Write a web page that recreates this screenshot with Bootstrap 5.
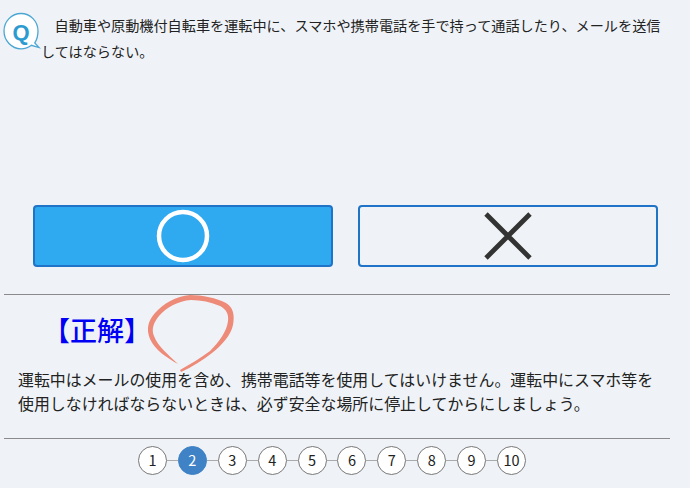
<!DOCTYPE html>
<html lang="ja">
<head>
<meta charset="utf-8">
<title>問題</title>
<link href="https://cdn.jsdelivr.net/npm/bootstrap@5.3.0/dist/css/bootstrap.min.css" rel="stylesheet">
<style>
html,body{height:488px;overflow:hidden}
body{background:#eff3f7;color:#222;font-family:"Noto Sans CJK JP","Noto Sans",sans-serif}
.quiz-wrap{width:690px}
.q-block{height:205px;padding:13px 25px 0 0;font-size:14.15px;line-height:25.5px}
.q-icon{float:left;width:41px;height:40px;margin:-3px 0 0 0}
.q-text{text-indent:13.5px;margin:0}
.ans-row{padding:0 32px 0 33px;gap:25px}
.ans-btn{width:300px;height:62px;border:2px solid #1f74c7;border-radius:4px;padding:0;background:transparent}
.ans-btn.is-on{background:#2fa9f0}
.rule-line{margin:0;width:666px;margin-left:4px;opacity:1;border:0;border-top:1.5px solid #8a8a8a}
.rule-a{margin-top:27px}
.result-row{height:73px;padding-left:43px}
.result-label{color:#0000f5;font-size:27px;font-weight:500;line-height:1;margin-top:21px}
.result-mark{margin-left:-4px;flex:none;overflow:visible}
.explain{font-size:15.93px;line-height:24px;padding-left:18px;width:665px;margin:0;height:70px}
.pager{padding-left:138px;margin-top:7px;align-items:center}
.pg-dot{width:29px;height:29px;flex:none;border:1px solid #777;border-radius:50%;background:#fff;color:#222;font-size:14.5px;line-height:1}
.pg-dot.is-on{background:#3f82c6;border-color:#3f82c6;color:#fff}
.pg-link{width:10.9px;height:1px;flex:none;background:#aaa}
</style>
</head>
<body>
<div class="quiz-wrap">
  <div class="q-block">
    <svg class="q-icon" viewBox="0 0 41 40">
      <path d="M21 3.500C11.600 3.500 4 11.400 4 21S11.600 38.800 21 38.800c4.100 0 7.700-1.300 10.400-3.500l7.600 2.200-4.200-4.600C37 29.500 38 25.300 38 21 38 11.400 30.400 3.500 21 3.500z" fill="#fff" stroke="#4ba6d3" stroke-width="1.300"/>
      <text x="21" y="29.500" text-anchor="middle" font-family="Liberation Sans,sans-serif" font-weight="700" font-size="22" fill="#2b9bd0">Q</text>
    </svg>
    <p class="q-text">自動車や原動機付自転車を運転中に、スマホや携帯電話を手で持って通話したり、メールを送信してはならない。</p>
  </div>
  <div class="d-flex ans-row">
    <button type="button" class="ans-btn is-on d-flex align-items-center justify-content-center" aria-label="○">
      <svg width="54" height="54" viewBox="0 0 54 54"><circle cx="27" cy="27" r="24" fill="none" stroke="#fff" stroke-width="4.500"/></svg>
    </button>
    <button type="button" class="ans-btn d-flex align-items-center justify-content-center" aria-label="×">
      <svg width="48" height="48" viewBox="0 0 48 48"><path d="M2 2L46 46M46 2L2 46" fill="none" stroke="#333" stroke-width="4.800"/></svg>
    </button>
  </div>
  <hr class="rule-line rule-a">
  <div class="d-flex result-row">
    <div class="result-label">【正解】</div>
    <svg class="result-mark" width="90" height="78" viewBox="0 0 90 78">
      <path d="M31 69C20 63 8 55 3 44-1 34 1 26 8 18 16 9 29 1 43 0 55 0 70 3 79 8 86 12 88 20 86 30 84 40 75 50 65 58 56 65 45 72 34 77L33 75C43 69 54 63 63 56 72 47 80 36 81 26 82 19 79 14 73 11 64 7 54 5 44 5 31 6 20 12 12 21 7 27 4 34 7 41 11 52 22 60 31 69Z" fill="#ee8a78"/>
    </svg>
  </div>
  <p class="explain">運転中はメールの使用を含め、携帯電話等を使用してはいけません。運転中にスマホ等を使用しなければならないときは、必ず安全な場所に停止してからにしましょう。</p>
  <hr class="rule-line">
  <div class="d-flex pager">
    <div class="pg-dot d-flex align-items-center justify-content-center">1</div><div class="pg-link"></div>
    <div class="pg-dot is-on d-flex align-items-center justify-content-center">2</div><div class="pg-link"></div>
    <div class="pg-dot d-flex align-items-center justify-content-center">3</div><div class="pg-link"></div>
    <div class="pg-dot d-flex align-items-center justify-content-center">4</div><div class="pg-link"></div>
    <div class="pg-dot d-flex align-items-center justify-content-center">5</div><div class="pg-link"></div>
    <div class="pg-dot d-flex align-items-center justify-content-center">6</div><div class="pg-link"></div>
    <div class="pg-dot d-flex align-items-center justify-content-center">7</div><div class="pg-link"></div>
    <div class="pg-dot d-flex align-items-center justify-content-center">8</div><div class="pg-link"></div>
    <div class="pg-dot d-flex align-items-center justify-content-center">9</div><div class="pg-link"></div>
    <div class="pg-dot d-flex align-items-center justify-content-center">10</div>
  </div>
</div>
<script src="https://cdn.jsdelivr.net/npm/bootstrap@5.3.0/dist/js/bootstrap.bundle.min.js"></script>
</body>
</html>
